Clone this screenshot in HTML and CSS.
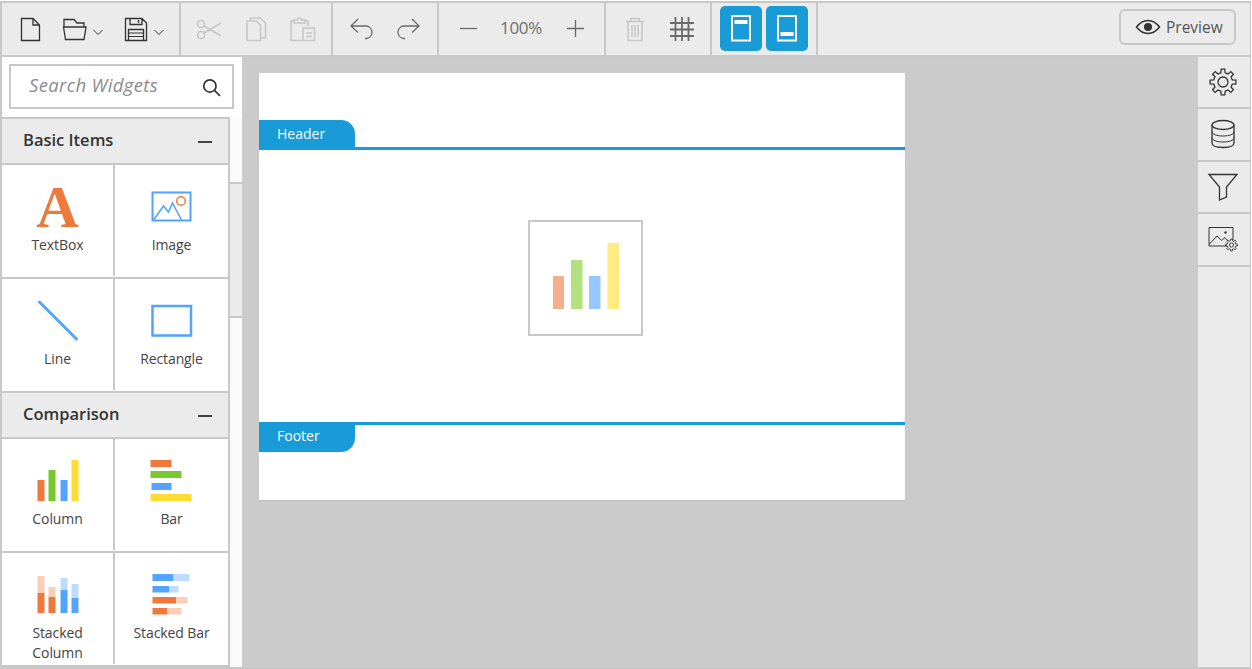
FILE: index.html
```html
<!DOCTYPE html>
<html lang="en">
<head>
<meta charset="utf-8">
<title>Report Designer</title>
<link rel="stylesheet" href="styles.css">
</head>
<body>
<div class="app">
  <header class="toolbar">
    <div class="group g1">
      <svg class="ic dark" width="30" height="36" viewBox="16 10 30 36"><path d="M21.5 18.5H33L39.5 25V40.5H21.5Z M33 18.5V25H39.5"/></svg>
      <svg class="ic dark" width="48" height="36" viewBox="60 10 48 36"><path d="M64 27V19.5H74L77 23H84V27 M63.5 27H86L84 39.5H65.5Z"/><path class="thin" d="M93.5 30L98 34.5L102.5 30"/></svg>
      <svg class="ic dark" width="48" height="36" viewBox="122 10 48 36"><path d="M125.5 18.5H142L146.5 23V40.5H125.5Z M130 18.5V24.5H142V18.5 M138.500 20V23 M128.500 40.500V29.500H143.500V40.500"/><path class="thin" d="M128.500 33H143.500 M128.500 36.500H143.500 M154.500 30L159 34.500L163.500 30"/></svg>
    </div>
    <div class="group g2">
      <svg class="ic off" width="36" height="36" viewBox="191 10 36 36"><circle cx="201" cy="24" r="3.500"/><circle cx="201" cy="35" r="3.500"/><path d="M204 26L221 36 M204 33L221 23"/></svg>
      <svg class="ic off" width="36" height="36" viewBox="238 10 36 36"><path d="M250.500 20V18H260L265.500 23V38H261 M247 21H256L260.500 25V40.500H247Z"/></svg>
      <svg class="ic off" width="36" height="36" viewBox="285 10 36 36"><path d="M294 21H291V40.500H303 M308 26V21H305 M294 23V20H297.500A2 2 0 0 1 301.500 20H305V23H294Z M303 28H314.500V40.500H303Z M306 33H312 M306 36.500H312"/></svg>
    </div>
    <div class="group g3">
      <svg class="ic mid" width="36" height="36" viewBox="344 10 36 36"><path d="M358 19L351 26L358 32.500 M351 26H366.500A6.300 6.300 0 0 1 366.500 38.500H365"/></svg>
      <svg class="ic mid" width="36" height="36" viewBox="390 10 36 36"><path d="M412 19L419 26L412 32.500 M419 26H403.500A6.300 6.300 0 0 0 403.500 38.500H405"/></svg>
    </div>
    <div class="group g4">
      <svg class="ic mid" width="36" height="36" viewBox="450 10 36 36"><path d="M460 28.500H477"/></svg>
      <span class="zoom">100%</span>
      <svg class="ic mid" width="36" height="36" viewBox="558 10 36 36"><path d="M576.500 20V37 M568 28.500H585"/></svg>
    </div>
    <div class="group g5">
      <svg class="ic off" width="36" height="36" viewBox="617 10 36 36"><path d="M626 21.500H644 M631 21.500V18.500H639V21.500 M628 21.500V40.500H642V21.500 M632 25V37 M635 25V37 M638 25V37"/></svg>
      <svg class="ic grid" width="36" height="36" viewBox="664 10 36 36"><path d="M675.500 17V41 M682 17V41 M688.500 17V41 M670 23H694 M670 29.500H694 M670 36H694"/></svg>
    </div>
    <div class="group g6">
      <button class="band-btn" type="button"><svg width="21" height="27" viewBox="0 0 21 27"><rect x="1" y="1" width="18" height="24.500" class="frame"/><rect x="3.500" y="5" width="13" height="4" class="bar"/></svg></button>
      <button class="band-btn" type="button"><svg width="21" height="27" viewBox="0 0 21 27"><rect x="1" y="1" width="18" height="24.500" class="frame"/><rect x="3.500" y="17" width="13" height="4" class="bar"/></svg></button>
    </div>
    <div class="spacer"></div>
    <button class="preview" type="button">
      <svg class="ic eye" width="26" height="16" viewBox="0 0 26 16"><path d="M1.500 8C5 3.500 9 1.500 13 1.500S21 3.500 24.500 8C21 12.500 17 14.500 13 14.500S5 12.500 1.500 8Z"/><circle class="fill" cx="13" cy="8" r="4"/></svg>
      <span>Preview</span>
    </button>
  </header>

  <div class="main">
    <aside class="sidebar">
      <div class="search">
        <span class="search-text">Search Widgets</span>
        <svg class="ic dark glass" width="19" height="19" viewBox="0 0 18 18"><circle cx="7.500" cy="7.500" r="5.800"/><path d="M11.800 11.800L17 17"/></svg>
      </div>
      <div class="lower">
        <div class="list">
          <div class="section-head"><span>Basic Items</span><i class="minus"></i></div>
          <div class="row">
            <div class="cell left">
              <div class="icon"><span class="glyph-a">A</span></div>
              <div class="label">TextBox</div>
            </div>
            <div class="cell">
              <svg class="icon" width="80" height="53" viewBox="131.500 181 80 53">
                <rect x="152" y="192.500" width="38" height="28" fill="none" stroke="#54a3ff" stroke-width="2"/>
                <path d="M153 220L163 206L168 212L172 203L181 220" fill="none" stroke="#54a3ff" stroke-width="1.600"/>
                <circle cx="180.500" cy="201" r="4.300" fill="#fff" stroke="#ed7a3c" stroke-width="1.500"/>
              </svg>
              <div class="label">Image</div>
            </div>
          </div>
          <div class="row">
            <div class="cell left">
              <svg class="icon" width="80" height="53" viewBox="17.500 295 80 53"><path d="M39 302L76 339" stroke="#54a3ff" stroke-width="3" stroke-linecap="round"/></svg>
              <div class="label">Line</div>
            </div>
            <div class="cell">
              <svg class="icon" width="80" height="53" viewBox="131.500 295 80 53"><rect x="152" y="306" width="38.500" height="29.500" fill="none" stroke="#54a3ff" stroke-width="2.500"/></svg>
              <div class="label">Rectangle</div>
            </div>
          </div>
          <div class="section-head"><span>Comparison</span><i class="minus"></i></div>
          <div class="row">
            <div class="cell left">
              <svg class="icon" width="80" height="53" viewBox="17.500 455 80 53">
                <rect x="37" y="480" width="7" height="21" fill="#ed7a3c"/><rect x="48" y="470" width="7" height="31" fill="#78c92e"/><rect x="60" y="480" width="7" height="21" fill="#54a3ff"/><rect x="71" y="460" width="7" height="41" fill="#ffdc33"/>
              </svg>
              <div class="label">Column</div>
            </div>
            <div class="cell">
              <svg class="icon" width="80" height="53" viewBox="131.500 455 80 53">
                <rect x="150" y="460" width="21" height="7" fill="#ed7a3c"/><rect x="150" y="471" width="31" height="7" fill="#78c92e"/><rect x="151" y="483" width="20" height="7" fill="#54a3ff"/><rect x="150" y="494" width="41" height="7" fill="#ffdc33"/>
              </svg>
              <div class="label">Bar</div>
            </div>
          </div>
          <div class="row">
            <div class="cell left">
              <svg class="icon" width="80" height="53" viewBox="17.500 569 80 53">
                <rect x="37" y="576" width="7" height="17" fill="#f8ceb6"/><rect x="37" y="593" width="7" height="20" fill="#ed7a3c"/>
                <rect x="48" y="587" width="7" height="10" fill="#f8ceb6"/><rect x="48" y="597" width="7" height="16" fill="#ed7a3c"/>
                <rect x="60" y="578" width="7" height="12" fill="#bfdcff"/><rect x="60" y="590" width="7" height="23" fill="#54a3ff"/>
                <rect x="71" y="584" width="7" height="14" fill="#bfdcff"/><rect x="71" y="598" width="7" height="15" fill="#54a3ff"/>
              </svg>
              <div class="label narrow">Stacked Column</div>
            </div>
            <div class="cell">
              <svg class="icon" width="80" height="53" viewBox="131.500 569 80 53">
                <rect x="152" y="574" width="21" height="7" fill="#54a3ff"/><rect x="173" y="574" width="16" height="7" fill="#bfdcff"/>
                <rect x="152" y="586" width="16.500" height="6.500" fill="#54a3ff"/><rect x="168.500" y="586" width="9.500" height="6.500" fill="#bfdcff"/>
                <rect x="152" y="597" width="23.500" height="6.500" fill="#ed7a3c"/><rect x="175.500" y="597" width="11.500" height="6.500" fill="#f8ceb6"/>
                <rect x="152" y="608" width="15" height="6.500" fill="#ed7a3c"/><rect x="167" y="608" width="14" height="6.500" fill="#f8ceb6"/>
              </svg>
              <div class="label">Stacked Bar</div>
            </div>
          </div>
        </div>
        <div class="track"><div class="thumb"></div></div>
      </div>
    </aside>

    <section class="stage">
      <div class="report">
        <div class="band-top"><div class="tab tab-head">Header</div></div>
        <div class="body-area">
          <div class="placeholder">
            <svg width="111" height="112" viewBox="530 222 111 112">
              <rect x="553" y="276" width="11" height="33" fill="#f4b08a"/><rect x="571" y="260" width="11.500" height="49" fill="#b2e17f"/><rect x="589" y="276" width="11.500" height="33" fill="#96c8ff"/><rect x="607.500" y="243" width="11.500" height="66" fill="#ffeb80"/>
            </svg>
          </div>
        </div>
        <div class="band-bottom"><div class="tab tab-foot">Footer</div></div>
      </div>
    </section>

    <nav class="rail">
      <div class="rail-item h52"><svg class="ic dark" width="30" height="30" viewBox="-15 -15 30 30"><path d="M9.260-2.140L12.870-1.810V1.810L9.260 2.140L8.060 5.030L10.380 7.820L7.820 10.380L5.030 8.060L2.140 9.260L1.810 12.870H-1.810L-2.140 9.260L-5.030 8.060L-7.820 10.380L-10.380 7.820L-8.060 5.030L-9.260 2.140L-12.870 1.810V-1.810L-9.260-2.140L-8.060-5.030L-10.380-7.820L-7.820-10.380L-5.030-8.060L-2.140-9.260L-1.810-12.870H1.810L2.140-9.260L5.030-8.060L7.820-10.380L10.380-7.820L8.060-5.030Z"/><circle cx="0" cy="0" r="5"/></svg></div>
      <div class="rail-item h53"><svg class="ic dark" width="26" height="30" viewBox="0 0 26 30"><ellipse cx="13" cy="6" rx="11" ry="4.500"/><path d="M2 6V24C2 27 7 28.500 13 28.500S24 27 24 24V6"/><path class="hair" d="M2 12.500C2 15.500 7 17 13 17S24 15.500 24 12.500 M2 18.500C2 21.500 7 23 13 23S24 21.500 24 18.500"/></svg></div>
      <div class="rail-item h52"><svg class="ic dark" width="32" height="30" viewBox="0 0 32 30"><path d="M2 2.500H30L19.500 15V25L12.500 28V15Z"/></svg></div>
      <div class="rail-item h53"><svg class="ic dark" width="34" height="28" viewBox="0 0 34 28"><path class="thin" d="M21 21H3V2.500H27V15 M3.500 19L11 11L15.500 15.500L19 12.500L22 16"/><circle class="fill" cx="19.500" cy="7.500" r="1.200"/><g transform="translate(25.500 20) scale(.46)"><path class="thin2" d="M9.260-2.140L12.870-1.810V1.810L9.260 2.140L8.060 5.030L10.380 7.820L7.820 10.380L5.030 8.060L2.140 9.260L1.810 12.870H-1.810L-2.140 9.260L-5.030 8.060L-7.820 10.380L-10.380 7.820L-8.060 5.030L-9.260 2.140L-12.870 1.810V-1.810L-9.260-2.140L-8.060-5.030L-10.380-7.820L-7.820-10.380L-5.030-8.060L-2.140-9.260L-1.810-12.870H1.810L2.140-9.260L5.030-8.060L7.820-10.380L10.380-7.820L8.060-5.030Z"/><circle class="thin2" cx="0" cy="0" r="4.500"/></g></svg></div>
    </nav>
  </div>
</div>
</body>
</html>
```

FILE: styles.css
```css
* { box-sizing: border-box; }
html, body { margin: 0; height: 100%; background: #fff; }
body { padding-top: 1px; overflow: hidden; font-family: "Open Sans", "Noto Sans", sans-serif; color: #333; }
.app { height: 668px; width: 1251px; border: 2px solid #c8c8c8; border-right-width: 1px; display: flex; flex-direction: column; }

.toolbar { height: 54px; flex: none; display: flex; background: #ebebeb; border-bottom: 2px solid #c8c8c8; }
.group { display: flex; align-items: flex-start; height: 52px; border-right: 2px solid #c8c8c8; }
.group > svg { margin-top: 7px; display: block; flex: none; }
.g1 { width: 179px; padding-left: 14px; gap: 14px; }
.g2 { width: 152px; padding-left: 10px; gap: 11px; }
.g3 { width: 106px; padding-left: 11px; gap: 10px; }
.g4 { width: 167px; padding-left: 11px; }
.g5 { width: 106px; padding-left: 11px; gap: 11px; }
.g6 { width: 106px; padding: 3px 0 0 8px; gap: 4px; }
.spacer { flex: 1; }

.ic { fill: none; stroke-width: 1.3; }
.ic .thin { stroke-width: 1; }
.dark { stroke: #333; }
.glass { stroke-width: 1.600; margin-top: 2px; }
.off { stroke: #c6c6c6; stroke-width: 1.500; }
.mid { stroke: #6a6a6a; }
.grid { stroke: #6a6a6a; stroke-width: 1.800; }
.zoom { width: 72px; margin-left: -1px; margin-top: 13px; text-align: center; font-size: 17px; line-height: 24px; color: #6f6f6f; letter-spacing: -.3px; }

.band-btn { width: 42px; height: 45px; padding: 0; border: 0; border-radius: 5px; background: #189bd7; display: flex; align-items: center; justify-content: center; }
.band-btn svg { display: block; }
.frame { fill: none; stroke: #fff; stroke-width: 2; }
.bar { fill: #fff; }

.preview { align-self: flex-start; margin: 6px 14px 0 0; width: 117px; height: 36px; padding: 0 0 0 14px; background: #ebebeb; border: 2px solid #c8c8c8; border-radius: 6px; display: flex; align-items: center; gap: 5px; font: 15.500px/20px "Open Sans", sans-serif; color: #555; }
.eye { stroke: #333; stroke-width: 1.500; flex: none; }
.fill { fill: #333; stroke: none; }

.main { flex: 1; min-height: 0; display: flex; }

.sidebar { width: 240px; flex: none; background: #fff; display: flex; flex-direction: column; }
.search { height: 45px; width: 225px; margin: 7px 0 8px 7px; flex: none; border: 2px solid #c8c8c8; display: flex; align-items: center; justify-content: space-between; padding: 0 11px 0 18px; }
.search-text { font-size: 18.500px; line-height: 24px; margin-top: -4px; font-style: italic; color: #8c8c8c; letter-spacing: .35px; }
.lower { flex: 1; min-height: 0; display: flex; }
.list { width: 228px; flex: none; border-right: 2px solid #c8c8c8; border-top: 2px solid #c8c8c8; overflow: hidden; }
.section-head { height: 46px; display: flex; align-items: center; justify-content: space-between; padding: 0 16px 0 21px; background: #ebebeb; border-bottom: 2px solid #c8c8c8; font-size: 16.500px; font-weight: 600; color: #333; }
.section-head span { margin-top: -3px; }
.minus { display: block; width: 14px; height: 2px; margin-top: 1px; background: #444; }
.row { height: 114px; display: flex; border-bottom: 2px solid #c8c8c8; }
.cell { width: 113px; height: 111px; display: flex; flex-direction: column; align-items: center; padding-top: 16px; }
.cell.left { width: 113px; border-right: 2px solid #c8c8c8; }
.icon { display: block; width: 80px; height: 53px; flex: none; text-align: center; }
.glyph-a { font: 700 59px/53px "Liberation Serif", serif; color: #ed7a3c; display: block; }
.label { width: 100px; margin-top: 1px; text-align: center; font-size: 14px; line-height: 20px; color: #444; letter-spacing: -.1px; }
.label.narrow { width: 70px; }

.track { width: 12px; flex: none; background: #fafafa; padding-top: 65px; }
.thumb { height: 136px; background: #ebebeb; border-top: 2px solid #c8c8c8; border-bottom: 2px solid #c8c8c8; }

.stage { flex: 1; min-width: 0; background: #cbcbcb; padding: 16px 0 0 17px; }
.report { width: 646px; height: 427px; background: #fff; display: flex; flex-direction: column; box-shadow: 0 1px 1px #c0c0c0; }
.band-top { height: 77px; flex: none; display: flex; align-items: flex-end; border-bottom: 3px solid #189bd7; }
.tab { width: 96px; height: 30px; background: #189bd7; color: #fff; font-size: 14px; line-height: 27px; padding-left: 18px; }
.tab-head { border-radius: 0 14px 0 0; margin-bottom: -3px; }
.tab-foot { border-radius: 0 0 14px 0; margin-top: -3px; }
.body-area { flex: 1; display: flex; justify-content: center; align-items: center; padding-bottom: 16px; }
.placeholder { width: 115px; height: 116px; border: 2px solid #c8c8c8; margin-left: 7px; }
.placeholder svg { display: block; }
.band-bottom { height: 78px; flex: none; border-top: 3px solid #189bd7; }

.rail { width: 52px; flex: none; background: #ebebeb; display: flex; flex-direction: column; }
.rail-item { display: flex; align-items: center; justify-content: center; border-bottom: 2px solid #c8c8c8; padding: 0 3px 1px 0; }
.h52 { height: 52px; }
.h53 { height: 53px; }
.rail .hair { stroke-width: 1; }
.thin2 { stroke-width: 2; fill: none; stroke: #333; }
```
